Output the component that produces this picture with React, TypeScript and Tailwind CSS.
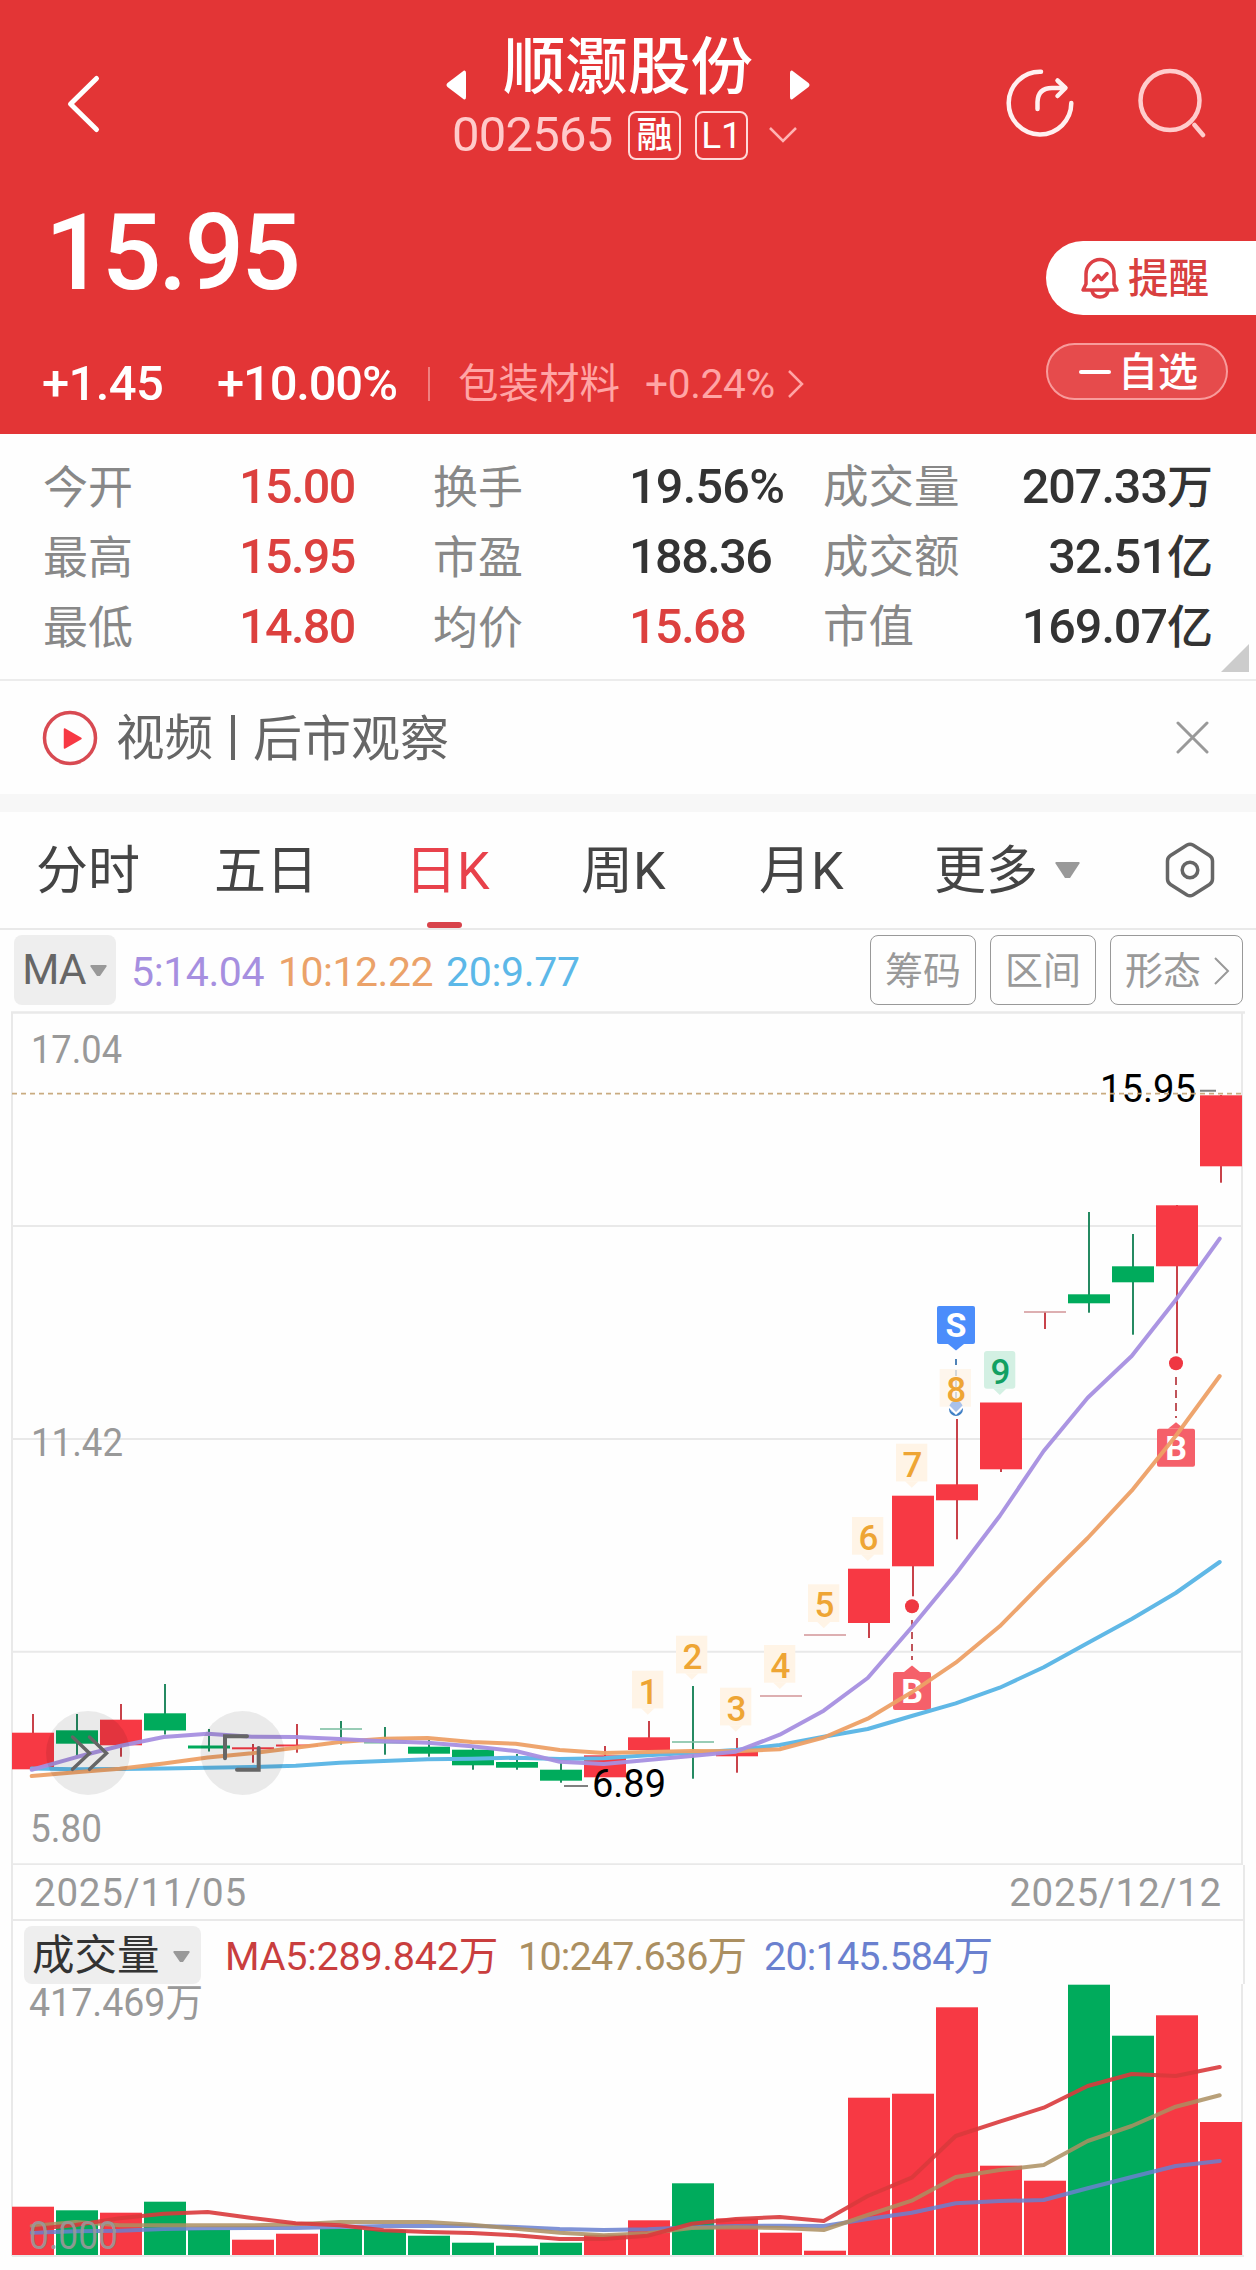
import React from 'react';

type Direction = 'up' | 'down';

interface Candle {
  dir: Direction;
  high: number;
  top: number;
  bottom: number;
  low: number;
  volume: number;
}

const RED = '#f73944';
const GREEN = '#00ab5c';
const STEP = 44;

const candles: Candle[] = [
  { dir: 'up', high: 1714, top: 1732.7, bottom: 1769.3, low: 1769, volume: 2206.7 },
  { dir: 'down', high: 1714, top: 1730.3, bottom: 1743.7, low: 1755.7, volume: 2210.3 },
  { dir: 'up', high: 1704, top: 1719.7, bottom: 1745.3, low: 1756.7, volume: 2212.7 },
  { dir: 'down', high: 1684, top: 1713.3, bottom: 1730.5, low: 1734.5, volume: 2201.7 },
  { dir: 'down', high: 1729, top: 1745.5, bottom: 1748.5, low: 1751.5, volume: 2230 },
  { dir: 'up', high: 1744, top: 1747.3, bottom: 1749.3, low: 1762.7, volume: 2239.7 },
  { dir: 'up', high: 1724, top: 1744.5, bottom: 1746.5, low: 1752.7, volume: 2233.7 },
  { dir: 'down', high: 1721, top: 1728.2, bottom: 1729.8, low: 1744.5, volume: 2228.7 },
  { dir: 'down', high: 1727, top: 1742, bottom: 1743.6, low: 1754.7, volume: 2230 },
  { dir: 'down', high: 1740, top: 1746.7, bottom: 1753.7, low: 1756.7, volume: 2235.7 },
  { dir: 'down', high: 1748, top: 1749.7, bottom: 1765.3, low: 1769.7, volume: 2242.7 },
  { dir: 'down', high: 1754, top: 1762, bottom: 1767.7, low: 1769.7, volume: 2245.7 },
  { dir: 'down', high: 1763, top: 1769.7, bottom: 1780.7, low: 1782.7, volume: 2242.7 },
  { dir: 'up', high: 1746, top: 1755.3, bottom: 1777.3, low: 1777, volume: 2234.7 },
  { dir: 'up', high: 1721, top: 1737.3, bottom: 1750, low: 1750, volume: 2220.3 },
  { dir: 'down', high: 1686, top: 1741.2, bottom: 1742.8, low: 1778.7, volume: 2183.3 },
  { dir: 'up', high: 1738, top: 1751.3, bottom: 1756.3, low: 1772.7, volume: 2218.5 },
  { dir: 'up', high: 1696, top: 1695.2, bottom: 1696.8, low: 1696, volume: 2232.7 },
  { dir: 'up', high: 1635, top: 1634.2, bottom: 1635.8, low: 1635, volume: 2250.7 },
  { dir: 'up', high: 1569, top: 1568.7, bottom: 1623, low: 1638, volume: 2097.7 },
  { dir: 'up', high: 1496, top: 1495.7, bottom: 1566.3, low: 1596.3, volume: 2093.7 },
  { dir: 'up', high: 1419, top: 1484.3, bottom: 1500.3, low: 1539.3, volume: 2007.3 },
  { dir: 'up', high: 1403, top: 1402.5, bottom: 1469.3, low: 1472, volume: 2165.7 },
  { dir: 'up', high: 1312, top: 1311.2, bottom: 1312.8, low: 1329, volume: 2180.7 },
  { dir: 'down', high: 1212, top: 1294.3, bottom: 1303.3, low: 1312.7, volume: 1984.7 },
  { dir: 'down', high: 1234, top: 1266.3, bottom: 1282.3, low: 1334.7, volume: 2035.7 },
  { dir: 'up', high: 1205, top: 1205.3, bottom: 1266.3, low: 1353.3, volume: 2015.3 },
  { dir: 'up', high: 1095, top: 1095.3, bottom: 1166.3, low: 1182.7, volume: 2122 },
];

const priceMa5 = [
  1769.7, 1757.3, 1746, 1737, 1733.7, 1736.7, 1737, 1739, 1741.3, 1742.7, 1746.3, 1751, 1761.7, 1764,
  1760, 1756, 1751.7, 1734.7, 1710.7, 1678, 1627.3, 1574, 1516, 1451, 1397.7, 1356, 1300, 1238.7,
];
const priceMa10 = [
  1776, 1772.3, 1768.7, 1763.5, 1757.5, 1753.3, 1747.7, 1742, 1738.7, 1738, 1742, 1743.7, 1750, 1753,
  1752, 1751, 1751.3, 1749.3, 1737.5, 1718.7, 1692.3, 1662.7, 1626.3, 1581.7, 1538, 1490.7, 1436, 1376,
];
const priceMa20 = [
  1768.5, 1769.3, 1769, 1768.5, 1767.7, 1767, 1765.7, 1762.7, 1761, 1759.3, 1758.7, 1757.7, 1759, 1758.3,
  1755.3, 1752.7, 1750, 1745, 1736.7, 1729, 1716, 1703.3, 1687.7, 1667.3, 1643, 1619, 1593, 1562,
];
const volMa5 = [
  2229.3, 2225, 2218.3, 2213.7, 2212, 2218, 2223.3, 2225.3, 2230.3, 2232, 2233, 2235.3, 2239, 2239,
  2235.7, 2223.7, 2219, 2217, 2221, 2196, 2177.7, 2136, 2121.7, 2107.7, 2086, 2074, 2076, 2067,
];
const volMa10 = [
  2226, 2222, 2225.3, 2225.3, 2225.3, 2225.3, 2224.3, 2222, 2222, 2222, 2224.7, 2228.7, 2232.7, 2235.3,
  2233.3, 2228, 2227.3, 2228, 2230, 2215, 2200.7, 2177, 2170, 2165, 2141, 2126, 2106.7, 2095.3,
];
const volMa20 = [
  2232.7, 2231.3, 2230.7, 2229, 2228.3, 2228, 2228, 2227, 2226, 2226, 2226, 2227, 2229, 2230,
  2229.3, 2227.3, 2226, 2225.7, 2226, 2219, 2212.7, 2203.3, 2201, 2200, 2188.3, 2177, 2166, 2161,
];

const countTags = [
  { n: 1, x: 632, y: 1670.7 },
  { n: 2, x: 676, y: 1635.7 },
  { n: 3, x: 720, y: 1687.7 },
  { n: 4, x: 764, y: 1645 },
  { n: 5, x: 808, y: 1584.3 },
  { n: 6, x: 852, y: 1517 },
  { n: 7, x: 896, y: 1443.7 },
  { n: 8, x: 939.7, y: 1369 },
  { n: 9, x: 984, y: 1351 },
];

const stats = [
  ['今开', '15.00', '换手', '19.56%', '成交量', '207.33万'],
  ['最高', '15.95', '市盈', '188.36', '成交额', '32.51亿'],
  ['最低', '14.80', '均价', '15.68', '市值', '169.07亿'],
];

const toPoints = (values: number[]) => values.map((y, i) => `${31.7 + i * STEP},${y}`).join(' ');

const MaLine: React.FC<{ values: number[]; color: string; opacity?: number }> = ({ values, color, opacity = 1 }) => (
  <polyline
    points={toPoints(values)}
    fill="none"
    stroke={color}
    strokeWidth={4}
    strokeLinecap="round"
    strokeLinejoin="round"
    opacity={opacity}
  />
);

const ChartText: React.FC<{ x: number; y: number; width: number; color?: string; children: string }> = ({
  x,
  y,
  width,
  color = '#999999',
  children,
}) => (
  <text x={x} y={y} fontSize={39} fill={color} textLength={width} lengthAdjust="spacingAndGlyphs">
    {children}
  </text>
);

const TradeTag: React.FC<{ x: number; y: number; type: 'B' | 'S' }> = ({ x, y, type }) => (
  <g>
    {type === 'B' ? (
      <path d={`M${x - 8} ${y}l8-6.500 8 6.500z`} fill="#f5606a" />
    ) : (
      <path d={`M${x - 8} ${y + 38}l8 6.500 8-6.500z`} fill="#4b8dfb" />
    )}
    <rect x={x - 19} y={y} width={38} height={38} rx={2} fill={type === 'B' ? '#f5606a' : '#4b8dfb'} />
    <text x={x} y={y + 31} fontSize={34} fontWeight={700} fill="#ffffff" textAnchor="middle">
      {type}
    </text>
  </g>
);

const Header: React.FC = () => (
  <header className="h-[434px] bg-[#e33536] text-white">
    <div className="flex h-[170px] pt-[30px]">
      <svg width="52" height="66" viewBox="0 0 52 66" className="mt-[41px] ml-[60px]" fill="none" stroke="white" strokeWidth="5" strokeLinecap="round" strokeLinejoin="round">
        <path d="M36.500 7.500L10.500 33l26 25.500" />
      </svg>
      <div className="ml-[334px] flex w-[364px] flex-col">
        <div className="flex h-[72px] items-center justify-between">
          <svg width="20" height="30" viewBox="0 0 20 30" className="mt-[38px]" fill="white">
            <path d="M18 0.500Q20 0 20 3v24Q20 30 18 29.500L1.500 17Q-.5 15 1.500 13z" />
          </svg>
          <h1 className="pt-1 text-[62.500px] leading-[72px] font-medium whitespace-nowrap">顺灏股份</h1>
          <svg width="20" height="30" viewBox="0 0 20 30" className="mt-[38px]" fill="white">
            <path d="M2 .5Q0 0 0 3v24Q0 30 2 29.500L18.500 17Q20.500 15 18.500 13z" />
          </svg>
        </div>
        <div className="mt-2 ml-1.5 flex h-[50px] items-center">
          <span className="w-[176px] text-[49px] leading-[50px] tracking-[-0.800px] text-[#ffcaca]">002565</span>
          <span className="flex h-[49px] w-[53px] shrink-0 items-center justify-center rounded-lg border-2 border-[#ffd9d9] pt-0.5 text-[36px] leading-none font-medium">
            融
          </span>
          <span className="ml-3.5 flex h-[49px] w-[53px] shrink-0 items-center justify-center rounded-lg border-2 border-[#ffd9d9] text-[37px] leading-none">
            L1
          </span>
          <svg width="28" height="16" viewBox="0 0 28 16" className="ml-[21px] shrink-0" fill="none" stroke="#ffb3b3" strokeWidth="2.500">
            <path d="M1 1l13 13L27 1" />
          </svg>
        </div>
      </div>
      <svg width="70" height="70" viewBox="0 0 70 70" className="mt-[38px] ml-[195px]" fill="none" stroke="#fff0f0" strokeWidth="4.500" strokeLinecap="round" strokeLinejoin="round">
        <path d="M36 3.800A31.300 31.300 0 1 0 66.300 35" />
        <path d="M32.500 41v-7Q33 20 47 20h13M52.500 12.500L60.500 20l-8 8" />
      </svg>
      <svg width="72" height="72" viewBox="0 0 72 72" className="mt-[36px] ml-[61px]" fill="none" stroke="#ffcccc" strokeWidth="4.500" strokeLinecap="round">
        <circle cx="34" cy="34.500" r="29.500" />
        <path d="M58.500 59l8.500 10" />
      </svg>
    </div>

    <div className="flex">
      <div className="w-[1046px]">
        <div className="mt-[31px] ml-[45px] text-[105px] leading-[106px] font-medium tracking-[-3px]">15.95</div>
        <div className="mt-[46px] flex h-[60px] items-center pt-0.5 text-[49px] font-medium">
          <span className="ml-[42px] w-[175px] tracking-[-0.600px]">+1.45</span>
          <span className="w-[211px] tracking-[-1.200px]">+10.00%</span>
          <span className="h-[34px] w-0.5 bg-[#f08080]" />
          <span className="ml-[28px] w-[187px] text-[40.500px] font-normal text-[#ffa5a5]">包装材料</span>
          <span className="w-[142px] text-[40.500px] font-normal tracking-[-0.300px] text-[#ffa5a5]">+0.24%</span>
          <svg width="18" height="30" viewBox="0 0 18 30" fill="none" stroke="#ffa5a5" strokeWidth="2.500">
            <path d="M2 2l13 13L2 28" />
          </svg>
        </div>
      </div>
      <div className="flex w-[210px] flex-col">
        <button className="mt-[71px] flex h-[74px] items-center rounded-l-full bg-white pl-[34px] text-[40.500px] leading-none font-medium text-[#d8403f]">
          <svg width="40" height="42" viewBox="0 0 40 42" fill="none" stroke="#dc4045" strokeWidth="3.500" strokeLinejoin="round" strokeLinecap="round">
            <path d="M3 33h34l-3-6V17a14 14.500 0 0 0-28 0v10z" />
            <path d="M12 34q1.500 6 8 6t8-6M13.500 23.500l4.500-5 3.500 4 5.500-6" />
          </svg>
          <span className="ml-2 pt-0.5">提醒</span>
        </button>
        <button className="mt-[28px] flex h-[57px] w-[182px] items-center rounded-full border-2 border-[#f89b9b] bg-[#e64b4c] pl-[31px] text-[40px] leading-none font-medium">
          <span className="h-1 w-[32px] rounded bg-white" />
          <span className="ml-[7px] pt-0.5">自选</span>
        </button>
      </div>
    </div>
  </header>
);

const StatsPanel: React.FC = () => (
  <section className="flex h-[247px] border-b-2 border-[#ececec] pt-[18px]">
    <div className="w-[1212px] text-[48.500px] text-[#333333]">
      {stats.map((row, i) => (
        <div key={row[0]} className="flex h-[70px] items-center font-medium whitespace-nowrap">
          <span className="ml-[43px] w-[196px] pt-[3px] text-[45px] font-normal text-[#888888]">{row[0]}</span>
          <span className="w-[194px] tracking-[-1.600px] text-[#dc403e]">{row[1]}</span>
          <span className="w-[196px] pt-[3px] text-[45px] font-normal text-[#888888]">{row[2]}</span>
          <span className={`w-[194px] ${i === 0 ? 'tracking-[-0.700px]' : 'tracking-[-1.500px]'} ${i === 2 ? 'text-[#dc403e]' : ''}`}>
            {row[3]}
          </span>
          <span className="pt-[3px] text-[45.500px] font-normal text-[#888888]">{row[4]}</span>
          <span className="ml-auto tracking-[-1px]">
            {row[5].slice(0, -1)}
            <span className="text-[46px]">{row[5].slice(-1)}</span>
          </span>
        </div>
      ))}
    </div>
    <svg width="28" height="28" viewBox="0 0 28 28" className="mt-auto mb-[7px] ml-[9px]" fill="#cccccc">
      <path d="M28 0v28H0z" />
    </svg>
  </section>
);

const VideoBar: React.FC = () => (
  <section className="flex h-[131px] items-center border-b-[18px] border-[#f7f7f7] pr-[47px] pl-[42px]">
    <svg width="56" height="56" viewBox="0 0 56 56" fill="none">
      <circle cx="28" cy="28" r="25.500" stroke="#d84a52" strokeWidth="3.500" />
      <path d="M22.500 19v19l16.500-9.500z" fill="#f73944" stroke="#f73944" strokeWidth="1.500" strokeLinejoin="round" />
    </svg>
    <span className="ml-[18px] pt-1 text-[48.500px] text-[#666666]">视频</span>
    <span className="ml-[18px] h-[45px] w-1 bg-[#666666]" />
    <span className="ml-[18px] pt-1 text-[49px] text-[#666666]">后市观察</span>
    <svg width="33" height="33" viewBox="0 0 33 33" className="ml-auto" fill="none" stroke="#999999" strokeWidth="3" strokeLinecap="round">
      <path d="M2 2l29 29M31 2L2 31" />
    </svg>
  </section>
);

const Tabs: React.FC = () => (
  <nav className="flex h-[118px] items-center border-b-2 border-[#e9e9e9] pl-[36px] text-[52px] text-[#444444]">
    <span className="w-[178px] pt-1">分时</span>
    <span className="w-[191px] pt-1">五日</span>
    <span className="relative w-[176px] pt-1 text-[#e8414b]">
      日K
      <span className="absolute -bottom-[17px] left-[22px] h-1.5 w-[35px] rounded-full bg-[#d8434b]" />
    </span>
    <span className="w-[178px] pt-1">周K</span>
    <span className="w-[175px] pt-1">月K</span>
    <span className="w-[121px] pt-1">更多</span>
    <svg width="25" height="17" viewBox="0 0 25 17" fill="#999999">
      <path d="M1 0h23q1 0 .5 1.500L15 16h-5L.5 1.500Q0 0 1 0z" />
    </svg>
    <svg width="50" height="56" viewBox="0 0 50 56" className="ml-[85px]" fill="none" stroke="#666666" strokeWidth="3.500">
      <path d="M22 3Q25 1.500 28 3l16.500 10.500q3 2 3 5.500v18q0 3.500-3 5.500L28 53q-3 1.500-6 0L5.500 42.500q-3-2-3-5.500V19q0-3.500 3-5.500z" />
      <circle cx="25" cy="28" r="7.800" />
    </svg>
  </nav>
);

const IndicatorBar: React.FC = () => (
  <div className="flex h-[81px] items-start pt-[5px] pr-[13px] pl-[14px] text-[40px] whitespace-nowrap">
    <button className="flex h-[70px] w-[102px] items-center rounded-lg bg-[#eeeeee] pl-1 text-[42.500px] text-[#666666]">
      <span className="w-[72px] tracking-[-0.800px]">MA</span>
      <svg width="17" height="11" viewBox="0 0 17 11" fill="#999999">
        <path d="M1 0h15q1 0 .5 1.500L10 11H7L.5 1.500Q0 0 1 0z" />
      </svg>
    </button>
    <div className="flex h-[76px] items-center text-[41px]">
      <span className="ml-[15px] w-[147px] tracking-[-0.400px] text-[#a68fe0]">5:14.04</span>
      <span className="w-[168px] tracking-[-0.500px] text-[#eba269]">10:12.22</span>
      <span className="tracking-[-0.300px] text-[#5cb8e8]">20:9.77</span>
    </div>
    <div className="ml-auto flex gap-3.5 text-[38px] text-[#999999]">
      <button className="h-[70px] w-[106px] rounded-lg border-[1.500px] border-[#999999] pt-0.5">筹码</button>
      <button className="h-[70px] w-[106px] rounded-lg border-[1.500px] border-[#999999] pt-0.5">区间</button>
      <button className="flex h-[70px] w-[133px] items-center rounded-lg border-[1.500px] border-[#999999] pt-0.5 pl-[14px]">
        形态
        <svg width="17" height="30" viewBox="0 0 17 30" className="ml-3" fill="none" stroke="#999999" strokeWidth="2">
          <path d="M2 2l13 13L2 28" />
        </svg>
      </button>
    </div>
  </div>
);

const PriceChart: React.FC = () => (
  <svg width="1256" height="854" viewBox="0 1011 1256 854" className="block">
    <path d="M11 1012.500h1234" stroke="#e9e9e9" strokeWidth="2.500" />
    <path d="M12 1012v853M1242 1012v853M12 1226h1230M12 1439h1230M12 1651.700h1230M12 1864.300h1230" stroke="#e9e9e9" strokeWidth="2" />

    <ChartText x={31} y={1063} width={91}>17.04</ChartText>
    <ChartText x={31} y={1456} width={92}>11.42</ChartText>
    <ChartText x={30} y={1842} width={72}>5.80</ChartText>

    {candles.map((c, i) => {
      const flat = c.bottom - c.top < 2;
      const x = 33 + i * STEP;
      return (
        <g key={i} fill={c.dir === 'up' ? RED : GREEN}>
          <rect x={x - 1} y={c.high} width={2} height={c.low - c.high} fill={c.dir === 'up' ? '#c8424a' : '#258a62'} />
          <rect
            x={x - 21}
            y={c.top}
            width={42}
            height={c.bottom - c.top}
            fill={flat ? (c.dir === 'up' ? '#d59c9f' : '#7fc0a3') : undefined}
          />
        </g>
      );
    })}

    {countTags.map(({ n, x, y }) => (
      <g key={n}>
        {n === 8 && (
          <g>
            <path d="M956 1359v47" stroke="#4f83b8" strokeWidth="2" strokeDasharray="6 5" />
            <circle cx="956" cy="1409" r="7" fill="#3f7fc4" />
          </g>
        )}
        <g fill={n === 9 ? '#d3f0e3' : '#fff4e6'} opacity={n === 8 ? 0.75 : 1}>
          <rect x={x} y={y} width={31.3} height={37.700} rx={n === 9 ? 3 : 0} />
          <path d={`M${x + 9} ${y + 37.500}h13.500l-6.700 6.500z`} />
        </g>
        {n === 8 && (
          <g>
            <circle cx="956" cy="1407" r="6.500" fill="#a9c1ea" />
            <path d="M949 1406.500l7 7 7-7" fill="none" stroke="white" strokeWidth="2" />
          </g>
        )}
        <text x={x + 16.5} y={y + 33} fontSize={35} fontWeight={500} fill={n === 9 ? '#12a062' : '#eea534'} textAnchor="middle">
          {n}
        </text>
      </g>
    ))}

    <TradeTag x={956} y={1306} type="S" />
    <circle cx="912" cy="1606.300" r="7" fill="#ef3742" />
    <path d="M912 1620v40" stroke="#c0545a" strokeWidth="2" strokeDasharray="7 5" />
    <TradeTag x={912} y={1672} type="B" />
    <circle cx="1176" cy="1363.300" r="7" fill="#ef3742" />
    <path d="M1176 1377v41" stroke="#c0545a" strokeWidth="2" strokeDasharray="8 5" />
    <TradeTag x={1176} y={1428.7} type="B" />

    <MaLine values={priceMa20} color="#60b8e6" />
    <MaLine values={priceMa10} color="#eda066" opacity={0.95} />
    <MaLine values={priceMa5} color="#a68fe0" opacity={0.95} />

    <ChartText x={1100} y={1102} width={96} color="#000000">15.95</ChartText>
    <path d="M1200 1090.700h16M564 1786h24" stroke="#808080" strokeWidth="2" />
    <ChartText x={592} y={1797} width={74} color="#000000">6.89</ChartText>
    <path d="M12 1093.700h1231" stroke="#c9ab80" strokeWidth="1.700" strokeDasharray="5 4" />

    <g fill="none" stroke="#666666" strokeLinecap="round">
      <circle cx="88" cy="1753" r="42" fill="#000000" fillOpacity="0.08" stroke="none" />
      <circle cx="242.500" cy="1753" r="42" fill="#000000" fillOpacity="0.08" stroke="none" />
      <path d="M72.500 1737l17 16.300-17 16M89.500 1737l17 16.300-17 16" strokeWidth="3.500" />
      <path d="M247 1736.300h-22v22M258.700 1748v21.700H237" strokeWidth="4" />
    </g>
  </svg>
);

const VolumeChart: React.FC = () => (
  <svg width="1256" height="286" viewBox="0 1984 1256 286" className="block overflow-visible">
    <path d="M12 1984v272M1242 1984v272M12 2256h1232" stroke="#e9e9e9" strokeWidth="2" />
    <ChartText x={29} y={2016} width={174}>417.469万</ChartText>
    {candles.map((c, i) => (
      <rect
        key={i}
        x={12 + i * STEP}
        y={c.volume}
        width={42}
        height={2255 - c.volume}
        fill={c.dir === 'up' ? RED : GREEN}
      />
    ))}
    <MaLine values={volMa20} color="#6a80cf" opacity={0.85} />
    <MaLine values={volMa10} color="#ab8f61" opacity={0.85} />
    <MaLine values={volMa5} color="#d93a3c" opacity={0.9} />
    <g opacity="0.9">
      <ChartText x={29} y={2248.5} width={89}>0.000</ChartText>
    </g>
  </svg>
);

const App: React.FC = () => {
  return (
    <main className="h-[2270px] w-[1256px] overflow-hidden bg-[#fefefe] font-[Roboto,'Noto_Sans_CJK_SC',sans-serif]">
      <Header />
      <StatsPanel />
      <VideoBar />
      <Tabs />
      <IndicatorBar />
      <PriceChart />
      <div className="mx-[11px] flex h-[56px] items-center justify-between border-x-2 border-b-2 border-[#e9e9e9] px-[21px] pt-0.5 text-[38.500px] tracking-[0.800px] text-[#999999]">
        <span>2025/11/05</span>
        <span>2025/12/12</span>
      </div>
      <div className="mx-[11px] flex h-[63px] items-start border-x-2 border-[#e9e9e9] pt-[5px] pl-[11px] whitespace-nowrap">
        <button className="flex h-[58px] w-[177px] items-center rounded-lg bg-[#eeeeee] pt-0.5 pl-2 text-[42.500px] leading-none text-[#333333]">
          成交量
          <svg width="17" height="11" viewBox="0 0 17 11" className="ml-[13px]" fill="#999999">
            <path d="M1 0h15q1 0 .5 1.500L10 11H7L.5 1.500Q0 0 1 0z" />
          </svg>
        </button>
        <div className="flex h-[62px] items-center text-[39.500px]">
          <span className="ml-[24px] w-[293px] tracking-[-0.200px] text-[#c93e3e]">MA5:289.842万</span>
          <span className="w-[246px] tracking-[-0.800px] text-[#ab8f61]">10:247.636万</span>
          <span className="tracking-[-0.800px] text-[#6a80cf]">20:145.584万</span>
        </div>
      </div>
      <VolumeChart />
    </main>
  );
};

export default App;
